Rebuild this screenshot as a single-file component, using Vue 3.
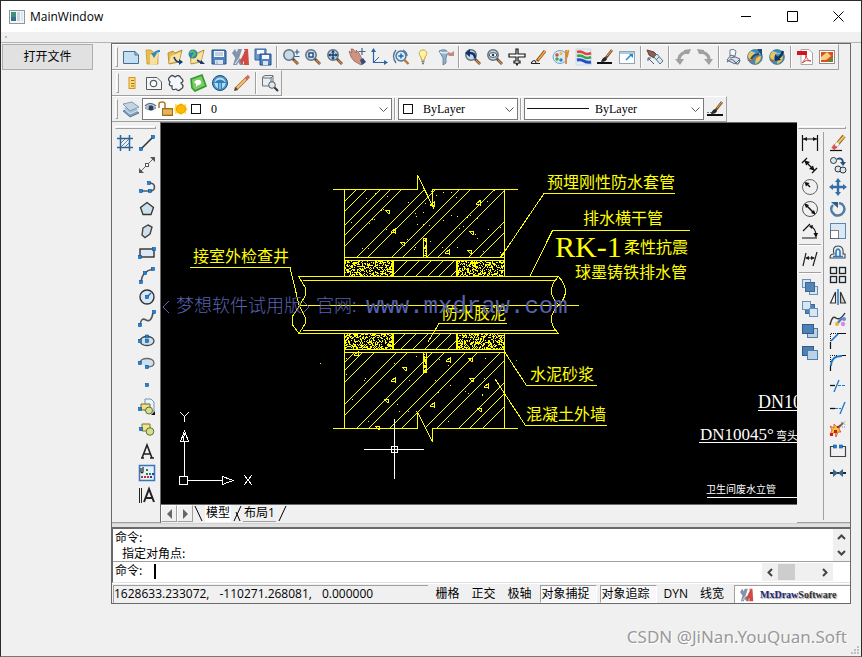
<script setup>
import { ref } from 'vue'

const node = (x, y) => `<rect x="${x - 1.5}" y="${y - 1.5}" width="3" height="3" fill="#1a86dd" stroke="#0b4f94" stroke-width=".6"/>`
const line = (d, c = '#222', w = 1.4) => `<path d="${d}" fill="none" stroke="${c}" stroke-width="${w}"/>`
const fill = (d, c, s = 'none', w = 1) => `<path d="${d}" fill="${c}" stroke="${s}" stroke-width="${w}"/>`
const lens = (inner = '') =>
  line('M10.500 10.500L16 16', '#5c4630', 2.6) + line('M12 12L16 16', '#d08a45', 1.3) +
  '<circle cx="7" cy="7" r="5.200" fill="#c3d9ec" stroke="#66717b" stroke-width="1.500"/>' + inner
const folder = (c = '#f2cd68') => fill('M2 5L7 3L9 5L16 2L13 14L3 16Z', c, '#a6822f', 0.8) + fill('M5 8L15 4L13 13L3 15Z', '#f9e2a0')
const globe =
  '<circle cx="9" cy="9" r="7.4" fill="#3a8fbd" stroke="#4a7486" stroke-width=".8"/>' +
  fill('M3 5Q8 2 9 6Q5 8 6 12Q2 11 2 8ZM10 9L15 8Q15 14 9 16Z', '#f0c64c') +
  line('M2 12Q8 15 15 4', '#d2553a', 1.2) + line('M4 3Q9 6 15 6', '#8fd0e6', 1)
const brush = line('M9 11L16 2', '#7a4a22', 2.6) + line('M11 8L16 2', '#ecb36b', 1) + fill('M5 14Q6 10 9 9L11 11Q10 14 5 14Z', '#262626')
const logo = fill('M1 17L6 1H10L5 17ZM0 5L3 1L12 17H8Z', '#8492aa') + fill('M12 1H16L17 17H12ZM8 13L13 3L14 8L10 17Z', '#d14b42') + line('M3 16L13 2', '#eef1f6', 1)
const stack = (order) => {
  const a = '<rect x="1.500" y="1.500" width="8" height="8" fill="#d7e6f3" stroke="#6a8fb5"/>'
  const b = '<rect x="8.500" y="8.500" width="8" height="8" fill="#d7e6f3" stroke="#6a8fb5"/>'
  const m = '<rect x="4.500" y="4.500" width="9" height="9" fill="#5584b6" stroke="#3c6896"/>'
  if (order === 'front') return a + b + m
  if (order === 'middle') return m + a + b
  const big = '<rect x="1.500" y="2.500" width="11" height="9" fill="#4d80b5" stroke="#315d8b"/>'
  const pale = '<rect x="6.500" y="6.500" width="10" height="9" fill="#b9d2e7" stroke="#557da4"/>'
  return order === 'up' ? pale + big : big + pale
}

const icons = {
  new: fill('M1.500 3.500H13L16.500 7V15.500H1.500Z', '#c5dff0', '#3f6f9b') + line('M13 3.500V7H16.500', '#3f6f9b', 1),
  open: fill('M2 2H7L9 4H14V16H3Z', '#e8bd4f', '#c59a40', 0.8) + fill('M6 7L14 4L13 16L6 17Z', '#f8dfa0') + line('M16 3Q11 3 10 7', '#238bc5', 1.8) + fill('M7 5H13L10 10Z', '#238bc5'),
  openAs: folder('#e6b752') + line('M8 9Q10 15 15 14', '#183c70', 1.6) + fill('M13 11L17 14L13 17Z', '#183c70'),
  openWeb: folder() + '<circle cx="5" cy="6" r="4.500" fill="#2a85ad"/>' + line('M2 5Q5 1 7 6L4 9', '#6ab957', 2) + line('M9 12L14 15', '#183c70', 1.5) + fill('M13 12L17 16H12Z', '#183c70'),
  save: fill('M2 2H15L16 3V16H2Z', '#4f82c1', '#244f86') + fill('M4 3H14V9H4Z', '#f3f6fa') + fill('M5 12H13V16H5Z', '#dce5ee') + line('M7 13V16M5 5H13M5 7H13', '#8aa8c8', 1),
  logo,
  saveAll: fill('M1 1H12V12H1Z', '#6c98cb', '#3a659c') + fill('M3 2H10V6H3Z', '#f3f6fa') + fill('M6 6H17V17H6Z', '#4f82c1', '#244f86') + fill('M8 7H15V11H8Z', '#f3f6fa') + fill('M9 13H14V17H9Z', '#dce5ee'),
  zoomPm: lens() + line('M12.500 4H17.500M15 1.500V6.500M12.500 8.500H17.500', '#315f93', 1.2),
  zoomBox: lens('<rect x="5" y="5" width="4" height="4" fill="#e6f0f8" stroke="#163e76" stroke-width="1.300"/>'),
  zoomAll: lens(line('M3.500 7H10.500M7 3.500V10.500', '#163e76') + fill('M7 2L9 4.500H5ZM7 12L9 9.500H5ZM2 7L4.500 5V9ZM12 7L9.500 5V9Z', '#163e76')),
  pan: fill('M1 3L4 5L3 1L5 1L8 5L8 2L11 5L14 11L17 14L13 17L6 13L3 9Z', '#cf9384', '#94584d', 0.7) + fill('M12 12L15 10L18 14L14 17Z', '#2f4f78') + line('M14 0V7M10.500 3.500H17.500', '#416691', 1.2),
  ucs: line('M3.500 3V14.500H16', '#2966a5', 1.2) + line('M3 15L9 9', '#2966a5', 1) + fill('M3.500 0L6 4H1ZM18 14.500L14 12V17Z', '#2966a5'),
  zoomDyn: line('M4 2Q-1 8 4 15M11 2Q15 4 15 8', '#4d7198', 1.3) + '<circle cx="9" cy="8" r="5" fill="#d8eaf5" stroke="#4d7198" stroke-width="1.400"/>' + line('M6.500 8H11.500M9 5.500V10.500', '#1666ac') + line('M12.500 12L16.500 16', '#bd7631', 2.4),
  bulb: fill('M9 2C5 2 4 6 7 9L7.500 12H10.500L11 9C14 6 13 2 9 2Z', '#fff3a0', '#c4a63b') + line('M7.500 13.500H10.500M8 15.500H10', '#6f7881', 1.4),
  filter: fill('M3 3Q9 0 12 4L10 10V15L7 17V10Z', '#93b2c9', '#567995', 0.8) + fill('M9 3L15 5L18 3V8L13 8Z', '#bf8c84') + line('M4 4Q8 6 12 4', '#d9edf5', 1.4),
  zoomPrev: lens(line('M11 10Q11 5 6 5H4', '#12336a', 2.3) + fill('M1 5L6 1V9Z', '#12336a')),
  zoomEye: lens('<ellipse cx="7" cy="7" rx="3.800" ry="2.400" fill="#fff" stroke="#3e5368"/><circle cx="7" cy="7" r="1.300" fill="#263d54"/>'),
  plane: fill('M8 1H10V6H17V9H10V13H12V15H10L9 17L8 15H6V13H8V9H1V6H8Z', '#fff', '#111', 1.2),
  pencilLine: line('M1 15.500H10M1 15Q5 10 6 15', '#222', 1.2) + line('M7 13L15 3', '#8d4d16', 3) + line('M8 12L15.500 2.500', '#f0ac49', 1.5),
  palette: '<ellipse cx="8" cy="9" rx="7" ry="6.500" fill="#d8eaf5" stroke="#6ca6cf"/><circle cx="5" cy="7" r="1.700" fill="#d64b35"/><circle cx="9" cy="5.500" r="1.500" fill="#f0b92f"/><circle cx="5" cy="11" r="1.700" fill="#45a744"/><circle cx="9" cy="12" r="1.700" fill="#3482ca"/>' + line('M14 2V16M16.500 2L15 9', '#df872b', 1.8),
  layers3: fill('M2 1H17V17H2Z', '#e3edf7', '#bdcddd', 0.6) + line('M3 4Q7 3 10 5T17 5', '#e44338', 2.6) + line('M3 8Q7 7 10 9T17 9', '#35a551', 2.6) + line('M3 12Q7 11 10 13T17 14', '#284fc0', 3),
  match: line('M1 15H16', '#111', 2) + brush,
  expand: '<rect x="1.500" y="3.500" width="15" height="12" fill="#fff" stroke="#8fa5b5"/>' + fill('M2 4H16V6H2Z', '#b4c8d5') + line('M8 12L13 7', '#1b8bd7', 1.5) + fill('M15 6V10L11 6Z', '#1b8bd7'),
  eraserHand: fill('M1 2L8 4L11 7L8 10L3 7Z', '#8b6259', '#644139') + fill('M8 9L11 6L17 13L14 16Z', '#d8e9f3', '#58788e') + line('M10 12L13 9', '#58788e', 1) + line('M2 10L8 16M2 10V13M2 10H5', '#435d73', 1),
  undo: line('M5 14Q4 6 12 4', '#a0a0a0', 3) + fill('M1 11H10L6 17Z', '#a0a0a0') + fill('M10 2L17 1L15 6L10 6Z', '#a0a0a0'),
  redo: line('M13 14Q14 6 6 4', '#a0a0a0', 3) + fill('M8 11H17L13 17Z', '#a0a0a0') + fill('M8 2L1 1L3 6L8 6Z', '#a0a0a0'),
  print: fill('M6 2Q9 0 12 3L11 8H6Z', '#f8f9fc', '#717a94') + fill('M3 12L7 7L16 11L11 16Z', '#dfe4ed', '#5c6682') + line('M3 14Q8 9 11 14T16 12M6 10L11 9', '#65708d', 1.2),
  globeUp: globe + line('M5 11Q8 6 13 6', '#234c7a', 2) + fill('M11 1H16V8Z', '#234c7a'),
  globeDown: globe + line('M15 3Q13 9 10 10', '#14335d', 2.4) + fill('M7 6V13L13 12Z', '#14335d'),
  pdf: fill('M5 1.500H13L16.500 5V16.500H5Z', '#fff', '#949494', 0.8) + fill('M1 3H11V7H1Z', '#cf171c') + line('M6 15Q11 10 10 7Q11 13 15 13Q10 11 6 15', '#d6463d', 1),
  image: '<rect x="1.500" y="2.500" width="15" height="13" fill="#fff" stroke="#9b8b80"/>' + fill('M3 4H15V14H3Z', '#d84d2c') + fill('M3 9L9 4L13 8L8 12H3Z', '#f4cf77') + fill('M9 14L15 9V14Z', '#5f8a35'),
  ruler: '<rect x="6" y="3.500" width="6" height="11" fill="#fbdc7c" stroke="#d8931a"/>' + line('M8 6.500H11M8 9.500H11M8 12H11', '#a0741b', 1),
  camera: fill('M1.500 3.500H12L16.500 8V15.500H1.500Z', '#f5f6f8', '#555b63') + '<circle cx="8.500" cy="9.500" r="3.200" fill="#fff" stroke="#555b63" stroke-width="1.200"/>',
  cloud: fill('M3 8Q0 5 3 3Q5 0 8 3Q12 0 14 4Q18 7 14 9Q18 13 14 15Q11 18 9 15Q4 17 5 12Q1 12 3 8Z', '#f2f7fb', '#41484f', 1.3),
  note: fill('M2 5L13 1L17 12L6 17L3 14Z', '#7ccc63', '#2f9a30', 1.6) + fill('M5 8Q9 4 12 7Q13 11 9 11L7 13V10Z', '#fff'),
  compass: '<circle cx="9" cy="9" r="7.500" fill="#4a93cc" stroke="#164f84"/><circle cx="9" cy="9" r="5.500" fill="#b9dcf0"/>' + fill('M3 9Q9 2 15 9H11V15H7V9Z', '#2f7fba') + line('M9 9V15', '#d9eef8', 1),
  pencil: line('M3 15L14 4', '#a66a28', 3.4) + line('M4 14L13 5', '#f7c672', 1.8) + line('M13 5L16 2', '#cf6b60', 3.2) + fill('M1 17L2 13L5 16Z', '#444'),
  find: fill('M1.500 3L4 1.500H12V9L9 12H1.500Z', '#e9ecf0', '#6b7279') + line('M1.500 4H10V11M10 4L12 2', '#6b7279', 1) + '<circle cx="11" cy="11" r="3.300" fill="#dceaf4" stroke="#555"/>' + line('M13.500 13.500L17 17', '#333', 2),
  layers: fill('M1 11L10 8L17 13L8 17Z', '#7d9dbb', '#456b8e', 0.8) + fill('M1 8L10 5L17 10L8 14Z', '#a8c3d9', '#e8eff5', 0.8) + fill('M1 4L10 2L17 7L8 11Z', '#c3d5e3', '#6b8ba6', 0.8),
  linePen: '<path d="M1 15H17" stroke="#111" stroke-width="2"/><path d="M1 12.500H7" stroke="#777" stroke-dasharray="2 1"/>' + brush,

  hatch: line('M4.500 1V17M13.500 1V17M1 4.500H17M1 13.500H17', '#2d6399', 1.5) + line('M5 9L9 5M5 13L13 5M9 13L13 9', '#5684b1', 1),
  line: line('M3 15L15 3', '#333', 1.6) + node(3, 15) + node(15, 3),
  xline: line('M2 16L16 2', '#666', 1) + fill('M1 17V12L6 17ZM17 1H12L17 6Z', '#555') + '<rect x="7.500" y="7.500" width="3" height="3" fill="#fff" stroke="#555"/>',
  pline: line('M3 13H11M11 5Q16.500 5 16.500 9T12 13', '#555', 1.6) + node(3, 13) + node(11, 5) + node(12, 13),
  pentagon: fill('M9 2.500L15.500 7.500L13 14.500H5L2.500 7.500Z', '#cfe0ed', '#333', 1.3),
  poly: fill('M10 3L14 5L12 12L7 15.500L4 13L5 6Z', '#cfe0ed', '#444', 1.4),
  rect: '<rect x="2" y="5" width="14" height="8" fill="#dce9f4" stroke="#222" stroke-width="1.300"/>' + node(2, 13) + node(16, 5),
  arc: line('M3 16Q4 5 15 3', '#555', 1.5) + node(3, 16) + node(7, 7) + node(15, 3),
  circle: '<circle cx="9" cy="9" r="7" fill="#d7e6f2" stroke="#333" stroke-width="1.400"/>' + line('M9 9L13 5', '#1473c8', 1.5) + node(9, 9),
  spline: line('M2 15Q3 7 8 10T15 3', '#555', 1.6) + node(2, 15) + node(16, 2),
  ellipse: '<ellipse cx="9" cy="9" rx="7" ry="4.500" fill="#cfe0ed" stroke="#444" stroke-width="1.300"/>' + node(9, 4.5) + node(2, 9) + node(9, 9),
  ellArc: fill('M2 9C2 3 16 3 16 9C16 12 13 13 9 13', '#cfe0ed', '#666', 1.3) + node(2, 9) + node(9, 13),
  point: node(9, 9),
  insert: fill('M7 1H13L16 4V13H7Z', '#eaf3fa', '#7096b5') + fill('M3 6H12V12H3Z', '#efe091', '#7a6921') + '<circle cx="11" cy="12.500" r="3.500" fill="#d9df83" stroke="#5a6f45"/>' + node(2, 11) + fill('M17 13V17H13Z', '#111'),
  block: fill('M4 4H12V11H4Z', '#f4e38f', '#857229') + '<circle cx="12" cy="11.500" r="3.800" fill="#d9df83" stroke="#5a6f45"/>' + node(3, 9),
  text: line('M4 16L9 3L14 16M6 12H12M3 16H6M12 16H16', '#222', 1.6),
  wipe: '<rect x="1.500" y="1.500" width="15" height="15" fill="#e5f0f8" stroke="#3976b5" stroke-width="1.500"/>' + line('M3 4V8Q5 10 5 7V3', '#222', 1.2) + fill('M8 5H10V7H8ZM8 9H10V11H8ZM11 9H13V11H11Z', '#347c4a') + fill('M3 12H5V14H3ZM6 12H8V14H6ZM9 12H11V14H9Z', '#c42f2f') + fill('M12 12H14V14H12ZM14 9H16V11H14Z', '#223f9c'),
  mtext: line('M1.500 2V17M3.500 2V17', '#222', 1) + line('M6 16L11 3L16 16M8 12H14', '#222', 2),

  dimLin: line('M1.500 1V17M16.500 1V17M2 5H16', '#111', 1.2) + fill('M2 5L6 3V7ZM16 5L12 3V7Z', '#111'),
  dimAli: line('M1 7L6 2M11 17L16 12M4 5L13 14', '#111', 1.3) + fill('M3.500 4.500L9 6L5 9.500ZM13.500 14.500L8 13L12 9.500Z', '#111'),
  dimRad: '<circle cx="9" cy="9" r="7.500" fill="none" stroke="#666"/>' + line('M9 9L5 5', '#111', 1.5) + fill('M3.500 4L8.500 5L5 8.500Z', '#111'),
  dimDia: '<circle cx="9" cy="9" r="7.500" fill="none" stroke="#555"/>' + line('M4 4L14 14', '#111', 1.5) + fill('M3.500 3.500L8 5L5 8ZM14.500 14.500L10 13L13 10Z', '#111'),
  dimAng: line('M1 16H16M2 9L9 2M9 4Q15 6 15 14', '#111', 1.2) + fill('M15 16L12.500 11H17ZM8 4L12 3L11 7Z', '#111'),
  dimObl: line('M2 16L5 3M12 16L16 2M5 8H13', '#222', 1.2) + fill('M4 8L8 6V10ZM14 8L10 6V10Z', '#222'),
  front: stack('front'),
  middle: stack('middle'),
  up: stack('up'),
  down: stack('down'),

  erase: line('M1 16.500H13', '#111', 1.2) + line('M6 13L15 2', '#8d6125', 4) + line('M8 10L15.500 2', '#edc75c', 2) + line('M4 15L7 11', '#d95750', 4) + line('M7 12L9 9', '#eef2f8', 3.6),
  copy: '<circle cx="4.500" cy="4.500" r="3" fill="#d7e7f3" stroke="#333"/><circle cx="9" cy="13" r="3" fill="#d7e7f3" stroke="#333"/><circle cx="14" cy="14" r="3" fill="#d7e7f3" stroke="#333"/>' + line('M8 3Q14 1 14 7', '#234f80', 1.8) + fill('M11 6H17L14 10Z', '#234f80'),
  move: line('M9 3V15M3 9H15', '#336ea8', 2.4) + fill('M9 0L12 4H6ZM9 18L12 14H6ZM0 9L4 6V12ZM18 9L14 6V12Z', '#336ea8'),
  rotate: line('M4 5Q1 8 3 12Q7 18 13 14Q18 9 13 4L10 3', '#527ba4', 2.4) + fill('M2 2H9V8Z', '#315d8b'),
  scale: '<rect x="1.500" y="1.500" width="15" height="15" fill="#d9e8f4" stroke="#5a87b0"/>' + '<path d="M1.500 8.500H9.500V16.500H1.500Z" fill="#fff" stroke="#111" stroke-dasharray="1 1"/>',
  offset: line('M1 14H16V10H14Q15 2 9 2T5 10Q1 10 1 14Z', '#444', 1.1) + line('M4 12.500H14M7 12V7Q9 3 11 7V12', '#2479ca', 1.6),
  array: '<g fill="#e2edf6" stroke="#222" stroke-width="1.300"><rect x="1.500" y="1.500" width="6" height="6"/><rect x="10.500" y="1.500" width="6" height="6"/><rect x="1.500" y="10.500" width="6" height="6"/><rect x="10.500" y="10.500" width="6" height="6"/></g>',
  mirror: line('M9 1V17', '#2479ca', 1.5) + fill('M6.500 4V15H1.500Z', '#fff', '#333', 1.2) + fill('M11.500 4V15H16.500Z', '#ccc', '#333', 1.2),
  splineEd: line('M1 15Q3 5 7 8T16 3', '#333', 1.4) + line('M8 14L13 8', '#4d7db6', 2.4) + '<circle cx="8" cy="14" r="2" fill="#e8b33b"/><circle cx="14" cy="14" r="2.200" fill="#d889e8"/><circle cx="15" cy="9" r="2" fill="#6a88d0"/>',
  chamfer: '<path d="M1.500 9V1.500H9" fill="none" stroke="#111" stroke-dasharray="1 1"/>' + line('M1.500 17V10M9 1.500H17', '#111', 1.2) + line('M2 9L9 2', '#1978ce', 1.7),
  fillet: '<path d="M1.500 8V1.500H9" fill="none" stroke="#111" stroke-dasharray="1 1"/>' + line('M1.500 17V11M13 1.500H17', '#111', 1.2) + line('M2 12Q2 2 13 2', '#1978ce', 1.8),
  trim: line('M1 9.500H6', '#111', 1.3) + line('M5 16L10 4', '#1978ce', 1.3) + '<path d="M9 9.500H17" stroke="#1978ce" stroke-dasharray="3 1"/>',
  extend: line('M1 10.500H6', '#111', 1.3) + line('M11 16L16 4', '#1978ce', 1.3) + '<path d="M6 10.500H12" stroke="#1978ce" stroke-dasharray="3 1"/>',
  explode: fill('M5 4L8 7L11 5L10 9L12 12L9 12L7 17L6 12L1 15L3 10L1 6L5 8Z', '#f0c63d', '#dd4a25', 0.8) + line('M10 7L14 3', '#666', 2) + '<path d="M12 4L17 1M13 7H17M12 2L17 5" stroke="#888" stroke-dasharray="1 1"/>' + fill('M5 10H8V13H5ZM1 13H4V16H1ZM8 6H10V8H8Z', '#c52020'),
  break: line('M5 4.500H1.500V14.500H16.500V4.500H13', '#444', 1.2) + node(6, 4.5) + node(12, 4.5),
  join: line('M1 9H17', '#111', 1.8) + fill('M4 5L9 9L4 13ZM14 5L9 9L14 13Z', '#36658f')
}

const fileBar = [
  ['new', 'open', 'openAs', 'openWeb', 'save', 'logo', 'saveAll'],
  ['zoomPm', 'zoomBox', 'zoomAll', 'pan', 'ucs', 'zoomDyn', 'bulb', 'filter'],
  ['zoomPrev', 'zoomEye', 'plane', 'pencilLine', 'palette', 'layers3', 'match', 'expand'],
  ['eraserHand'],
  ['undo', 'redo'],
  ['print', 'globeUp', 'globeDown'],
  ['pdf', 'image']
]
const toolBar = [['ruler', 'camera', 'cloud', 'note', 'compass', 'pencil'], ['find']]
const drawBar = ['line', 'xline', 'pline', 'pentagon', 'poly', 'rect', 'arc', 'circle', 'spline', 'ellipse', 'ellArc', 'point', 'insert', 'block', 'text', 'wipe', 'mtext']
const dimBar = [['dimLin', 'dimAli', 'dimRad', 'dimDia', 'dimAng'], ['dimObl'], ['front', 'middle', 'up', 'down']]
const editBar = ['erase', 'copy', 'move', 'rotate', 'scale', 'offset', 'array', 'mirror', 'splineEd', 'chamfer', 'fillet', 'trim', 'extend', 'explode', 'break', 'join']

const modes = ref([
  { name: '栅格', on: false },
  { name: '正交', on: false },
  { name: '极轴', on: false },
  { name: '对象捕捉', on: true },
  { name: '对象追踪', on: true },
  { name: 'DYN', on: false },
  { name: '线宽', on: false }
])
const command = ref('')

// 45 degree hatch: every line satisfies x + y = c, cut to the box
const hatch = (cs, x0, y0, x1, y1) =>
  cs.map((c) => {
    const xa = Math.max(x0, c - y1)
    const xb = Math.min(x1, c - y0)
    return xb > xa ? `M${xa} ${c - xa}L${xb} ${c - xb}` : ''
  }).join('')

let seed = 7
const rnd = () => {
  seed = (seed * 16807) % 2147483647
  return seed / 2147483647
}
const grains = (x0, y0, x1, y1, density) => {
  let d = ''
  for (let y = y0; y < y1; y++)
    for (let x = x0; x < x1; x++) if (rnd() < density) d += `M${x} ${y}h1v1h-1z`
  return d
}

const topHatch = hatch([546, 556, 570, 580, 591, 614, 625, 649, 660, 684, 695, 726, 737, 758], 345, 189, 504, 257)
const bottomHatch = hatch([707, 715, 727, 749, 760, 785, 797, 818, 830, 853, 865, 887, 898, 911], 345, 352, 504, 428)
const midHatchTop = hatch([668, 680, 692, 704, 715, 727], 394, 260, 456, 276)
const midHatchBottom = hatch([739, 750, 762, 774, 785, 797], 394, 334, 456, 349)
const sand = [[345, 261], [458, 261], [345, 334], [458, 334]].map(([x, y]) => grains(x, y, x + 47, y + 15, 0.44)).join('')
const specks = grains(346, 190, 504, 256, 0.004) + grains(346, 354, 504, 427, 0.004) +
  grains(424, 239, 426, 257, 0.5) + grains(424, 353, 426, 372, 0.5)
const stones = [[385, 210], [391, 230], [400, 242], [476, 202], [469, 231], [445, 251], [467, 250], [430, 203],
  [402, 367], [391, 379], [384, 399], [430, 404], [469, 378], [446, 359], [468, 358], [484, 385], [477, 408], [354, 353], [375, 426]]
  .map(([x, y], i) => (i % 2 ? `M${x} ${y + 2}l4 -3v4z` : `M${x} ${y}h5l-1 4z`)).join('')
</script>

<template>
  <div class="window">
    <header class="titlebar">
      <svg class="app-icon" width="16" height="14" viewBox="0 0 16 14">
        <rect x=".5" y=".5" width="15" height="13" fill="#f4f6f8" stroke="#8e979e" />
        <rect x="2" y="2" width="5" height="9" fill="#3f8f7b" />
        <rect x="2" y="7" width="5" height="4" fill="#3a6c8c" />
        <rect x="8" y="2" width="3" height="9" fill="#c7d6df" />
        <rect x="12" y="2" width="2" height="9" fill="#dfe6ea" />
      </svg>
      <h1>MainWindow</h1>
      <div class="caption">
        <button aria-label="Minimize"><svg width="11" height="11"><path d="M0 5.500H10" /></svg></button>
        <button aria-label="Maximize"><svg width="11" height="11"><path d="M.5 .5H10.500V10.500H.5Z" /></svg></button>
        <button aria-label="Close"><svg width="11" height="11"><path d="M.5 .5L10.500 10.500M10.500 .5L.5 10.500" /></svg></button>
      </div>
    </header>
    <div class="dock"><i></i></div>

    <main class="body">
      <aside><button class="open-file">打开文件</button></aside>

      <section class="cad">
        <div class="bar">
          <i class="grip"></i>
          <div v-for="(group, g) in fileBar" :key="g" class="group">
            <button v-for="n in group" :key="n" class="tool" :aria-label="n"><svg v-html="icons[n]"></svg></button>
          </div>
        </div>
        <div class="bar second">
          <i class="grip"></i>
          <div v-for="(group, g) in toolBar" :key="g" class="group">
            <button v-for="n in group" :key="n" class="tool" :aria-label="n"><svg v-html="icons[n]"></svg></button>
          </div>
        </div>
        <div class="bar">
          <i class="grip"></i>
          <button class="tool" aria-label="layers"><svg v-html="icons.layers"></svg></button>
          <div class="combo layer">
            <svg class="deco" width="60" height="18">
              <path d="M1 8Q6 3 12 8Q7 12 1 8Z" fill="#c6d6e4" stroke="#7b90a5" />
              <path d="M1 6Q6 1 12 6" fill="none" stroke="#5e7084" stroke-width="1.500" />
              <circle cx="7" cy="8" r="2.500" fill="#27405c" />
              <path d="M15 8V4Q15 2 18 2T21 4V8" fill="none" stroke="#a87a2a" stroke-width="1.500" />
              <rect x="18.500" y="8.500" width="10" height="7" fill="#d79a34" stroke="#9a6c22" />
              <path d="M19 11H28M19 13H28" stroke="#f3cf7d" />
              <path d="M37 3L39 5L42 4L42 7L44 9L42 11V14L39 13L37 15L34 13L31 14V11L30 9L31 7V4L34 5Z" fill="#fbdc4a" />
              <circle cx="37" cy="9" r="4.500" fill="#ffb900" stroke="#f0a000" />
              <rect x="47.500" y="4.500" width="9" height="9" fill="#fff" stroke="#111" />
            </svg>
            <select aria-label="Layer"><option>0</option></select>
            <svg class="chev" width="9" height="6"><path d="M.5 .5L4.500 4.500L8.500 .5" /></svg>
          </div>
          <i class="thin"></i>
          <div class="combo color">
            <svg class="deco" width="20" height="18"><rect x="3.500" y="4.500" width="9" height="9" fill="#fff" stroke="#111" /></svg>
            <select aria-label="Color"><option>ByLayer</option></select>
            <svg class="chev" width="9" height="6"><path d="M.5 .5L4.500 4.500L8.500 .5" /></svg>
          </div>
          <i class="thin"></i>
          <div class="combo ltype">
            <svg class="deco" width="66" height="18"><path d="M1 8.500H63" stroke="#111" /></svg>
            <select aria-label="Linetype"><option>ByLayer</option></select>
            <svg class="chev" width="9" height="6"><path d="M.5 .5L4.500 4.500L8.500 .5" /></svg>
          </div>
          <button class="tool last" aria-label="line pen"><svg v-html="icons.linePen"></svg></button>
        </div>

        <div class="middle">
          <nav class="left">
            <i class="hgrip"></i>
            <div class="cols">
              <div class="col"><button class="tool" aria-label="hatch"><svg v-html="icons.hatch"></svg></button></div>
              <div class="col">
                <button v-for="n in drawBar" :key="n" class="tool" :aria-label="n"><svg v-html="icons[n]"></svg></button>
              </div>
            </div>
          </nav>

          <div class="view">
            <svg class="canvas">
              <g transform="translate(-161 -123)">
                <g class="y">
                  <path :d="topHatch" /><path :d="bottomHatch" />
                  <path :d="midHatchTop" /><path :d="midHatchBottom" />
                  <path :d="stones" />
                  <path d="M333 189.500H417.500V175L434 209L432.500 203V189.500H518" />
                  <path d="M333 428.500H417.500V412L432.500 442V428.500H518" />
                  <path d="M344.500 189V276M504.500 189V276M344.500 333V428M504.500 333V428" />
                  <path d="M344 257.500H505M344 260.500H505M344 349.500H505M344 352.500H505" />
                  <path d="M298 276.500H559M303 280.500H556M299 305.500H579M303 330.500H556M299 333.500H559" />
                  <path d="M298.500 276.500L305 287V296L300 305L292 317V324L299 333.500L305 324V317L299 305" />
                  <path d="M558.500 276.500Q544 291 559 305Q572 291 558.500 276.500M559 305Q544 319 558.500 333.500" />
                  <path d="M423.500 257V238.500H426.500V257M423.500 352V372.500H426.500V352" />
                  <path d="M190 267.500H290L299 305" />
                  <path d="M675 193.500H544L505 251L500 257" />
                  <path d="M690 230.500H552.500L530 276" />
                  <path d="M507 323.500H439L428 342" />
                  <path d="M597 385.500H526.500L504 351" />
                  <path d="M607 425.500H525.500L495 379" />
                </g>
                <path class="dots" :d="sand" /><path class="dots" :d="specks" />
                <path class="dots" d="M392 260h2v16h-2zM456 260h2v16h-2zM392 333h2v16h-2zM456 333h2v16h-2zM320 363h1v1h-1z" />
                <rect x="516" y="360" width="1" height="1" fill="#0f0" />
                <g class="yt">
                  <text x="193" y="262">接室外检查井</text>
                  <text x="547" y="188">预埋刚性防水套管</text>
                  <text x="583" y="224">排水横干管</text>
                  <text x="555" y="257" class="big">RK-1</text>
                  <text x="624" y="253">柔性抗震</text>
                  <text x="575" y="278">球墨铸铁排水管</text>
                  <text x="442" y="319">防水胶泥</text>
                  <text x="530" y="380">水泥砂浆</text>
                  <text x="526" y="420">混凝土外墙</text>
                </g>
                <g class="blue">
                  <path class="bl" d="M169 301L163 307L169 313M303 301L309 307L303 313" />
                  <text x="176" y="312" class="t18">梦想软件试用版</text>
                  <text x="316" y="312" class="t18">官网:</text>
                  <text x="366" y="313" class="mono">www.mxdraw.com</text>
                </g>
                <g class="w">
                  <path d="M758 410.500H797M699 442.500H797M707 497.500H797" />
                  <path d="M184.500 476V441M180.500 441.500L184.500 431L188.500 441.500ZM183 441L184.500 433M188 480.500H222M222.500 476.500L233 480.500L222.500 484.500Z" />
                  <rect x="179.500" y="476.500" width="8" height="8" />
                  <path d="M180 412L184.500 416.500L189 412M184.500 416.500V422M244 475L252 485M252 475L244 485" />
                  <path d="M394.500 419V479M364 449.500H424" />
                  <rect x="391.500" y="446.500" width="6" height="6" />
                </g>
                <g class="wt">
                  <text x="758" y="408" class="t18">DN10</text>
                  <text x="700" y="440">DN10045°</text>
                  <text x="776" y="440" class="t11">弯头</text>
                  <text x="706" y="493" class="t10">卫生间废水立管</text>
                </g>
              </g>
            </svg>
            <div class="tabs">
              <button class="arrow" aria-label="Previous tab"><svg width="5" height="10"><path d="M5 0V10L0 5Z" /></svg></button>
              <button class="arrow" aria-label="Next tab"><svg width="5" height="10"><path d="M0 0V10L5 5Z" /></svg></button>
              <svg class="slash" width="10" height="18"><path d="M1 1L8 16" /></svg>
              <button class="tab active">模型</button>
              <svg class="slash" width="10" height="18"><path d="M9 1L2 16M4 7L8 16" /></svg>
              <button class="tab">布局1</button>
              <svg class="slash" width="10" height="18"><path d="M9 1L2 16" /></svg>
            </div>
          </div>

          <nav class="right">
            <i class="hgrip"></i>
            <div class="cols">
              <div class="col dims">
                <div v-for="(group, g) in dimBar" :key="g" class="vgroup">
                  <button v-for="n in group" :key="n" class="tool" :aria-label="n"><svg v-html="icons[n]"></svg></button>
                </div>
              </div>
              <div class="col edit">
                <button v-for="n in editBar" :key="n" class="tool" :aria-label="n"><svg v-html="icons[n]"></svg></button>
              </div>
            </div>
          </nav>
        </div>

        <div class="splitter"></div>

        <div class="console">
          <div class="log">
            <div class="lines"><p>命令:</p><p class="indent">指定对角点:</p></div>
            <div class="vscroll">
              <svg width="9" height="6"><path d="M1 5L4.500 1.500L8 5" /></svg>
              <svg width="9" height="6"><path d="M1 1L4.500 4.500L8 1" /></svg>
            </div>
          </div>
          <div class="entry">
            <label for="cmd">命令:</label>
            <i class="caret"></i>
            <input id="cmd" v-model="command" type="text" />
            <div class="hscroll">
              <svg width="6" height="9"><path d="M5 1L1.500 4.500L5 8" /></svg>
              <i class="thumb"></i>
              <svg width="6" height="9"><path d="M1 1L4.500 4.500L1 8" /></svg>
            </div>
          </div>
        </div>

        <footer class="status">
          <output class="coords"><span>1628633.233072,</span><span>-110271.268081,</span><span>0.000000</span></output>
          <button v-for="m in modes" :key="m.name" class="mode" :class="{ on: m.on }" @click="m.on = !m.on">{{ m.name }}</button>
          <div class="brand">
            <svg width="16" height="14" viewBox="0 0 18 18" v-html="icons.logo"></svg>
            <b>MxDraw</b><span>Software</span>
          </div>
        </footer>
      </section>
    </main>

    <div class="foot">
      <p>CSDN @JiNan.YouQuan.Soft</p>
      <svg class="size-grip" width="9" height="9"><path d="M6 0h2v2h-2zM6 3h2v2h-2zM6 6h2v2h-2zM3 3h2v2h-2zM3 6h2v2h-2zM0 6h2v2h-2z" /></svg>
    </div>
  </div>
</template>

<style>
body { margin: 0; background: #f0f0f0; }
</style>

<style scoped>
*, *::before { box-sizing: border-box; }
.window {
  min-height: 100vh;
  display: flex;
  flex-direction: column;
  background: #f0f0f0;
  border: 1px solid #2b2b2b;
  border-bottom-color: #777;
  font: 12px/16px "Open Sans", "Noto Sans CJK SC", sans-serif;
  color: #000;
}
button { font: inherit; color: inherit; border: 0; background: none; padding: 0; margin: 0; }
p { margin: 0; }

.titlebar { display: flex; align-items: center; height: 31px; padding-left: 8px; background: #fff; }
.titlebar h1 { margin: 0 0 0 5px; font-size: 12px; font-weight: 400; }
.caption { margin-left: auto; display: flex; }
.caption button { width: 46px; height: 29px; display: grid; place-items: center; }
.caption path { fill: none; stroke: #000; }
.dock { height: 11px; border-bottom: 1px solid #b4b4b4; padding: 4px; }
.dock i { display: block; width: 2px; height: 2px; background: #bbb; }

.body { display: flex; }
aside { width: 110px; flex: none; padding: 1px 0 0 1px; }
.open-file { width: 91px; height: 26px; border: 1px solid #adadad; background: #e1e1e1; }

.cad { flex: 1; min-width: 0; margin-right: 10px; border: 1px solid #696969; }
.bar {
  display: flex;
  align-items: center;
  width: max-content;
  height: 26px;
  padding-left: 3px;
  border-right: 1px solid #a0a0a0;
  border-bottom: 1px solid #a0a0a0;
  border-top: 1px solid #fff;
}
.bar.second { padding-left: 4px; }
.grip { width: 3px; height: 20px; margin-right: 2px; border: 1px solid #fff; border-right-color: #a0a0a0; border-bottom-color: #a0a0a0; }
.group { display: flex; }
.group + .group::before { content: ""; width: 2px; height: 22px; margin: 0 2px; border-left: 1px solid #a0a0a0; border-right: 1px solid #fff; }
.tool { width: 22px; height: 22px; display: grid; place-items: center; flex: none; }
.tool svg { width: 18px; height: 18px; }
.thin { width: 2px; height: 22px; margin: 0 2px; border-left: 1px solid #a0a0a0; border-right: 1px solid #fff; }

.combo { position: relative; height: 22px; }
.combo select {
  appearance: none;
  width: 100%;
  height: 22px;
  border: 1px solid #7a7a7a;
  border-radius: 0;
  background: #fff;
  font: 12px "Liberation Serif", serif;
  color: #000;
  padding: 0 20px 0 24px;
}
.combo .deco { position: absolute; left: 2px; top: 2px; pointer-events: none; }
.combo .chev { position: absolute; right: 4px; top: 9px; pointer-events: none; }
.chev path { fill: none; stroke: #555; }
.layer { width: 250px; }
.layer select { padding-left: 68px; }
.color { width: 120px; }
.ltype { width: 180px; }
.ltype select { padding-left: 70px; }

.middle { display: flex; }
.left { width: 48px; padding-left: 2px; border-bottom: 1px solid #a0a0a0; }
.hgrip { display: block; height: 3px; margin: 4px 4px 3px 1px; border: 1px solid #fff; border-right-color: #a0a0a0; border-bottom-color: #a0a0a0; }
.cols { display: flex; }
.view { flex: 1; min-width: 0; border-left: 1px solid #696969; border-top: 1px solid #696969; }
.canvas { display: block; width: 100%; height: 381px; background: #000; }
.right { width: 53px; display: flex; flex-direction: column; border-bottom: 1px solid #a0a0a0; }
.right .cols { flex: 1; padding-bottom: 2px; }
.dims { width: 27px; padding-left: 2px; border-right: 1px solid #a0a0a0; }
.edit { padding-left: 3px; }
.vgroup + .vgroup::before { content: ""; display: block; height: 2px; margin: 2px 2px 2px 0; border-top: 1px solid #a0a0a0; border-bottom: 1px solid #fff; }

.y path { fill: none; stroke: #ff0; shape-rendering: crispEdges; }
.dots { fill: #ff0; shape-rendering: crispEdges; }
.yt text { fill: #ff0; font: 16px "Noto Sans CJK SC", sans-serif; }
.yt .big { font: 30px "Liberation Serif", serif; }
.blue text { fill: #5862b0; }
.bl { fill: none; stroke: #5862b0; }
.blue .t18 { font: 300 18px "Noto Sans CJK SC", sans-serif; }
.blue .mono { font: 24px "Liberation Mono", monospace; }
.w path, .w rect { fill: none; stroke: #fff; shape-rendering: crispEdges; }
.wt text { fill: #fff; font: 17px "Liberation Serif", serif; }
.wt .t18 { font-size: 18px; }
.wt .t11 { font: 11px "Noto Sans CJK SC", sans-serif; }
.wt .t10 { font: 10px "Noto Sans CJK SC", sans-serif; }

.tabs { display: flex; height: 19px; border-top: 1px solid #696969; }
.arrow { width: 16px; height: 17px; display: grid; place-items: center; border: 1px solid #fff; border-right-color: #a0a0a0; border-bottom-color: #a0a0a0; }
.arrow path { fill: #666; }
.slash { margin: 0 1px; }
.slash path { fill: none; stroke: #000; }
.tab { height: 17px; padding: 0 1px; border-bottom: 1px solid #a0a0a0; }
.tab.active { background: #fff; border-bottom-color: #fff; }

.splitter { height: 4px; background: #e0e0e0; border-top: 1px solid #d0d0d0; }
.console { border: 1px solid #696969; border-right: 0; border-bottom-color: #e3e3e3; border-top-width: 2px; background: #fff; font-family: "Noto Sans CJK SC", sans-serif; }
.log { display: flex; height: 33px; border-bottom: 1px solid #a0a0a0; }
.lines { flex: 1; padding-left: 2px; }
.indent { padding-left: 7px; }
.vscroll { width: 17px; background: #f0f0f0; display: flex; flex-direction: column; align-items: center; justify-content: space-around; }
.vscroll path, .hscroll path { fill: none; stroke: #444; stroke-width: 2; }
.entry { display: flex; height: 20px; padding-left: 2px; }
.caret { width: 2px; height: 15px; margin: 2px 0 0 12px; background: #000; }
.entry input { flex: 1; min-width: 0; border: 0; outline: 0; padding: 0 4px; background: none; font: inherit; }
.hscroll { width: 71px; height: 18px; margin: 1px 17px 0 0; background: #f0f0f0; display: flex; align-items: center; padding: 0 5px; }
.thumb { width: 17px; height: 16px; margin: 0 auto 0 5px; background: #cdcdcd; }

.status { display: flex; height: 20px; padding: 1px 0 0 1px; gap: 3px; border-top: 1px solid #fff; }
.coords { flex: 1; display: flex; gap: 10px; border-top: 1px solid #a0a0a0; border-left: 1px solid #a0a0a0; white-space: nowrap; }
.mode { height: 18px; padding: 0 4px 0 3px; white-space: nowrap; border: 1px solid transparent; }
.mode.on { padding: 0 6px 0 1px; border-color: #a0a0a0 #fff #fff #a0a0a0; background: #f8f8f8; }
.brand { width: 116px; margin-left: 2px; padding-left: 4px; display: flex; align-items: center; background: #fff; border: 1px solid #a0a0a0; border-right: 0; border-bottom: 0; font: 700 10px "Liberation Serif", serif; text-shadow: 1px 1px 1px #999; }
.brand svg { margin-right: 5px; }
.brand b { color: #202a78; }
.brand span { color: #333; }

.foot { flex: 1; display: flex; align-items: flex-end; justify-content: flex-end; padding-bottom: 1px; }
.foot p { padding-bottom: 5px; font: 17px/26px "Noto Sans", sans-serif; color: #999; text-shadow: 1px 1px 0 #fff; }
.size-grip { margin: 0 1px 0 4px; }
.size-grip path { fill: #bfbfbf; }
</style>
